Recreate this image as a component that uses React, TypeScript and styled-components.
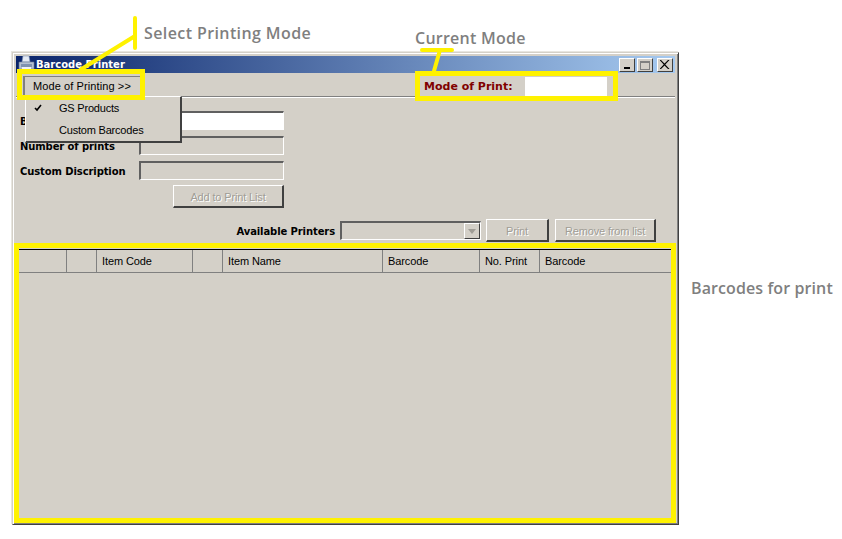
import React from "react";
import styled, { createGlobalStyle } from "styled-components";

const Global = createGlobalStyle`
  html, body { margin: 0; background: #fff; }
  * { box-sizing: border-box; }
`;
const Canvas = styled.div`
  position: relative; width: 842px; height: 539px; overflow: hidden; padding: 52px 0 0 12px;
  font-family: "Liberation Sans", Arial, sans-serif; font-size: 11px; color: #000;
`;
const Win = styled.div`
  width: 667px; height: 473px; background: #d4d0c8; padding: 3px; display: flex; flex-direction: column;
  border-top: 1px solid #d4d0c8; border-left: 1px solid #d4d0c8; border-right: 1px solid #404040; border-bottom: 1px solid #404040;
  box-shadow: inset 1px 1px 0 #fff, inset -1px -1px 0 #808080, -1px -1px 0 #e8e6e0;
`;
const TitleBar = styled.div`
  height: 17px; flex: none; display: flex; align-items: center; gap: 2px; padding: 0 2px 0 2px;
  background: linear-gradient(90deg, #0a246a, #a6caf0);
  color: #fff; font-family: "DejaVu Sans", sans-serif; font-weight: 700; font-size: 10px;
`;
const TitleText = styled.span` flex: 1; white-space: nowrap; margin-left: -1px; `;
const AppIcon = styled.svg` flex: none; margin-top: -3px; overflow: visible; `;
const WinButton = styled.div<{ $gap?: number }>`
  width: 16px; height: 14px; margin-left: ${(p) => p.$gap ?? 0}px; background: #d4d0c8;
  border-top: 1px solid #fff; border-left: 1px solid #fff; border-right: 1px solid #404040; border-bottom: 1px solid #404040;
  display: flex; align-items: center; justify-content: center;
`;
const MenuBar = styled.div`
  height: 24px; flex: none; display: flex; align-items: flex-start; justify-content: space-between;
  border-bottom: 1px solid #808080; box-shadow: 0 1px 0 #fff; padding: 3px 68px 0 7px;
`;
const MenuButton = styled.div`
  width: 118px; height: 20px; border-top: 1px solid #808080; border-left: 2px solid #808080;
  padding: 3px 0 0 8px; font-size: 11px; letter-spacing: 0.1px; white-space: nowrap;
`;
const ModeBox = styled.div` display: flex; align-items: center; height: 19px; margin-top: 1px; `;
const ModeLabel = styled.span`
  width: 101px; color: #800000; font-family: "DejaVu Sans", sans-serif; font-weight: 700; font-size: 11px; white-space: nowrap;
`;
const ModeValue = styled.div` width: 82px; height: 19px; background: #fff; `;
const Form = styled.div`
  display: grid; grid-template-columns: 119px 145px; gap: 6px 0; padding: 14px 0 0 4px; align-items: center; width: max-content;
`;
const Label = styled.label`
  font-family: "DejaVu Sans", sans-serif; font-weight: 700; font-size: 10px; letter-spacing: -0.1px; white-space: nowrap; padding-top: 2px;
`;
const Field = styled.div<{ $on?: boolean }>`
  height: 19px; background: ${(p) => (p.$on ? "#fff" : "#d4d0c8")};
  border-top: 2px solid #606060; border-left: 2px solid #606060; border-right: 1px solid #fff; border-bottom: 1px solid #fff;
`;
const Btn = styled.div<{ $w: number; $gap?: number }>`
  width: ${(p) => p.$w}px; height: 23px; flex: none; background: #d4d0c8; display: flex; align-items: center; justify-content: center;
  margin-left: ${(p) => p.$gap ?? 0}px; padding-top: 1px;
  border-top: 1px solid #fff; border-left: 1px solid #fff; border-right: 2px solid #404040; border-bottom: 2px solid #404040;
  color: #a09d96; text-shadow: 1px 1px 0 #fff; font-size: 11px; letter-spacing: -0.15px; white-space: nowrap;
`;
const AddBtn = styled(Btn)` grid-column: 2; justify-self: end; margin-top: -1px; `;
const PrintRow = styled.div`
  display: flex; align-items: center; justify-content: flex-end; gap: 5px; margin-top: 11px; padding-right: 19px;
`;
const PrinterSelect = styled(Field)`
  width: 141px; display: flex; justify-content: flex-end; align-items: center;
`;
const Arrow = styled.div`
  width: 16px; height: 16px; background: #d4d0c8; border-top: 1px solid #fff; border-left: 1px solid #fff;
  border-right: 1px solid #404040; border-bottom: 1px solid #404040; display: flex; align-items: center; justify-content: center;
`;
const Table = styled.div`
  flex: 1; margin: 7px 4px 3px 3px; border-top: 1px solid #000; display: flex; flex-direction: column;
`;
const HeadRow = styled.div`
  display: grid; grid-template-columns: 48px 30px 96px 30px 160px 97px 60px 1fr; height: 23px; border-bottom: 1px solid #808080;
`;
const HeadCell = styled.div`
  border-right: 1px solid #808080; padding: 5px 0 0 5px; font-size: 11px; letter-spacing: -0.1px; white-space: nowrap;
  &:last-child { border-right: 0; }
`;
const Popup = styled.div`
  position: absolute; left: 25px; top: 96px; width: 157px; height: 47px; background: #d4d0c8;
  border-top: 1px solid #fff; border-left: 1px solid #fff; border-right: 2px solid #404040; border-bottom: 2px solid #404040;
`;
const PopupItem = styled.div`
  position: relative; height: 22px; line-height: 22px; padding-left: 33px; font-size: 11px; white-space: nowrap; letter-spacing: -0.2px;
`;
const Check = styled.svg` position: absolute; left: 8px; top: 7px; `;
const Frame = styled.div<{ $x: number; $y: number; $w: number; $h: number }>`
  position: absolute; left: ${(p) => p.$x}px; top: ${(p) => p.$y}px; width: ${(p) => p.$w}px; height: ${(p) => p.$h}px;
  border: 5px solid #fff200; pointer-events: none;
`;
const Leaders = styled.svg` position: absolute; left: 0; top: 0; pointer-events: none; `;
const Note = styled.div<{ $x: number; $y: number; $ls: number }>`
  position: absolute; left: ${(p) => p.$x}px; top: ${(p) => p.$y}px; color: #7f7f7f; white-space: nowrap;
  font-family: "Open Sans", sans-serif; font-weight: 600; font-size: 16px; line-height: 22px; letter-spacing: ${(p) => p.$ls}px;
`;

const cols = ["", "", "Item Code", "", "Item Name", "Barcode", "No. Print", "Barcode"];

export default function App() {
  return (
    <Canvas>
      <Global />
      <Win>
        <TitleBar>
          <AppIcon width="17" height="17" viewBox="0 0 17 17">
            <path d="M5 1h6l1 6H4z" fill="#e4eaf4" stroke="#7f93b5" strokeWidth="0.6" />
            <path d="M1 7h15v7H1z" fill="#b4c0d2" stroke="#6a7893" strokeWidth="0.6" />
            <path d="M3 9h11v3H3z" fill="#7f92b0" />
            <path d="M4 12h9v3H4z" fill="#eef2f8" />
          </AppIcon>
          <TitleText>Barcode Printer</TitleText>
          <WinButton>
            <svg width="10" height="9"><rect x="2" y="7" width="6" height="2" fill="#000" /></svg>
          </WinButton>
          <WinButton>
            <svg width="12" height="10"><rect x="1.5" y="1.5" width="9" height="8" fill="none" stroke="#808080" /><rect x="1" y="1" width="10" height="2" fill="#808080" /></svg>
          </WinButton>
          <WinButton $gap={2}>
            <svg width="10" height="9"><path d="M1 0l3.5 3.5L8 0h1.5L5.3 4.5 9.5 9H8L4.5 5.5 1 9H-.5l4.2-4.5L-.5 0z" fill="#000" /></svg>
          </WinButton>
        </TitleBar>
        <MenuBar>
          <MenuButton>Mode of Printing &gt;&gt;</MenuButton>
          <ModeBox>
            <ModeLabel>Mode of Print:</ModeLabel>
            <ModeValue />
          </ModeBox>
        </MenuBar>
        <Form>
          <Label>Barcode</Label>
          <Field $on />
          <Label>Number of prints</Label>
          <Field />
          <Label>Custom Discription</Label>
          <Field />
          <AddBtn $w={111}>Add to Print List</AddBtn>
        </Form>
        <PrintRow>
          <Label>Available Printers</Label>
          <PrinterSelect>
            <Arrow>
              <svg width="8" height="5"><path d="M0 0h8L4 5z" fill="#a09d96" /></svg>
            </Arrow>
          </PrinterSelect>
          <Btn $w={63}>Print</Btn>
          <Btn $w={101} $gap={1}>Remove from list</Btn>
        </PrintRow>
        <Table>
          <HeadRow>
            {cols.map((c, i) => (
              <HeadCell key={i}>{c}</HeadCell>
            ))}
          </HeadRow>
        </Table>
      </Win>
      <Popup>
        <PopupItem>
          <Check width="8" height="8" viewBox="0 0 8 8"><path d="M1 4l2 2 4-5" fill="none" stroke="#000" strokeWidth="1.6" /></Check>
          GS Products
        </PopupItem>
        <PopupItem>Custom Barcodes</PopupItem>
      </Popup>
      <Frame $x={17} $y={69} $w={128} $h={31} />
      <Frame $x={415} $y={71} $w={203} $h={30} />
      <Frame $x={14} $y={243} $w={662} $h={280} />
      <Leaders width="842" height="539">
        <g stroke="#fff200" strokeWidth="4" strokeLinecap="round" fill="none">
          <path d="M135 18V48" />
          <path d="M135 36L80 70" />
          <path d="M422 50H452" />
          <path d="M440 50L434 71" />
        </g>
      </Leaders>
      <Note $x={144} $y={22} $ls={0.4}>Select Printing Mode</Note>
      <Note $x={415} $y={27} $ls={0.25}>Current Mode</Note>
      <Note $x={691} $y={277} $ls={0.1}>Barcodes for print</Note>
    </Canvas>
  );
}
